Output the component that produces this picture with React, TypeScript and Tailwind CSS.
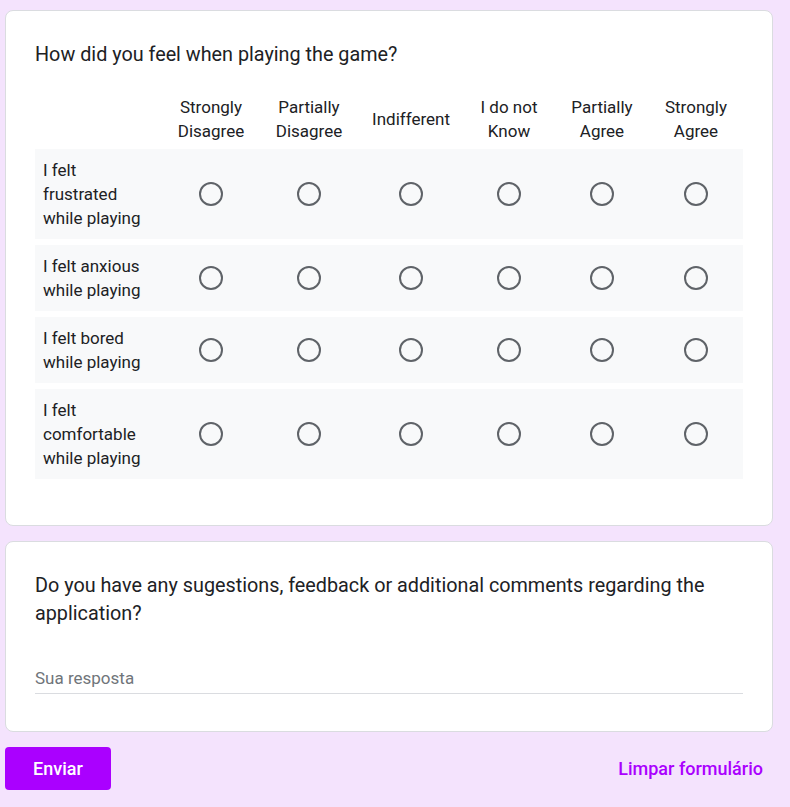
const columns = [
  ['Strongly', 'Disagree'],
  ['Partially', 'Disagree'],
  ['Indifferent'],
  ['I do not', 'Know'],
  ['Partially', 'Agree'],
  ['Strongly', 'Agree'],
];

const rows = [
  ['I felt', 'frustrated', 'while playing'],
  ['I felt anxious', 'while playing'],
  ['I felt bored', 'while playing'],
  ['I felt', 'comfortable', 'while playing'],
];

const gridCols = 'grid grid-cols-[128px_96px_100px_104px_92px_94px_94px]';

function Radio() {
  return (
    <div className="flex items-center justify-center">
      <div className="w-[24px] h-[24px] rounded-full border-2 border-[#5f6368]" />
    </div>
  );
}

export default function App() {
  return (
    <div
      className="min-h-[807px] bg-[#f4e3fd] pt-[10px] pl-[5px] text-[#202124]"
      style={{ fontFamily: 'Roboto, "Liberation Sans", sans-serif' }}
    >
      <div className="w-[768px] flex flex-col">
        {/* Pergunta em grade */}
        <div className="bg-white border border-[#dadce0] rounded-lg px-[29px] pt-[30px] pb-[46px]">
          <h2 className="text-[19.8px] leading-[28px]">How did you feel when playing the game?</h2>
          <div className={`${gridCols} mt-[26px] text-[17px] leading-[24px]`}>
            <div />
            {columns.map((col, i) => (
              <div key={i} className="flex flex-col items-center justify-center text-center">
                {col.map(line => (
                  <span key={line}>{line}</span>
                ))}
              </div>
            ))}
          </div>
          <div className="flex flex-col gap-[6px] mt-[6px]">
            {rows.map((row, i) => (
              <div key={i} className={`${gridCols} bg-[#f8f9fa] py-[9px] text-[17px] leading-[24px]`}>
                <div className="pl-2 flex flex-col justify-center whitespace-nowrap">
                  {row.map(line => (
                    <span key={line}>{line}</span>
                  ))}
                </div>
                {columns.map((_, j) => (
                  <Radio key={j} />
                ))}
              </div>
            ))}
          </div>
        </div>

        {/* Pergunta aberta */}
        <div className="mt-[15px] bg-white border border-[#dadce0] rounded-lg px-[29px] pt-[30px] pb-[37px]">
          <h2 className="text-[19.8px] leading-[28px]">
            Do you have any sugestions, feedback or additional comments regarding the application?
          </h2>
          <div className="mt-[38px] pb-[3px] border-b border-[#dadce0] text-[17px] leading-[24px] text-[#70757a]">
            Sua resposta
          </div>
        </div>

        <div className="mt-[15px] flex items-center justify-between">
          <button className="w-[106px] h-[43px] rounded bg-[#aa00ff] text-white text-[18px] font-medium">
            Enviar
          </button>
          <button className="mr-[10px] text-[18px] font-medium text-[#aa00ff]">Limpar formulário</button>
        </div>
      </div>
    </div>
  );
}
